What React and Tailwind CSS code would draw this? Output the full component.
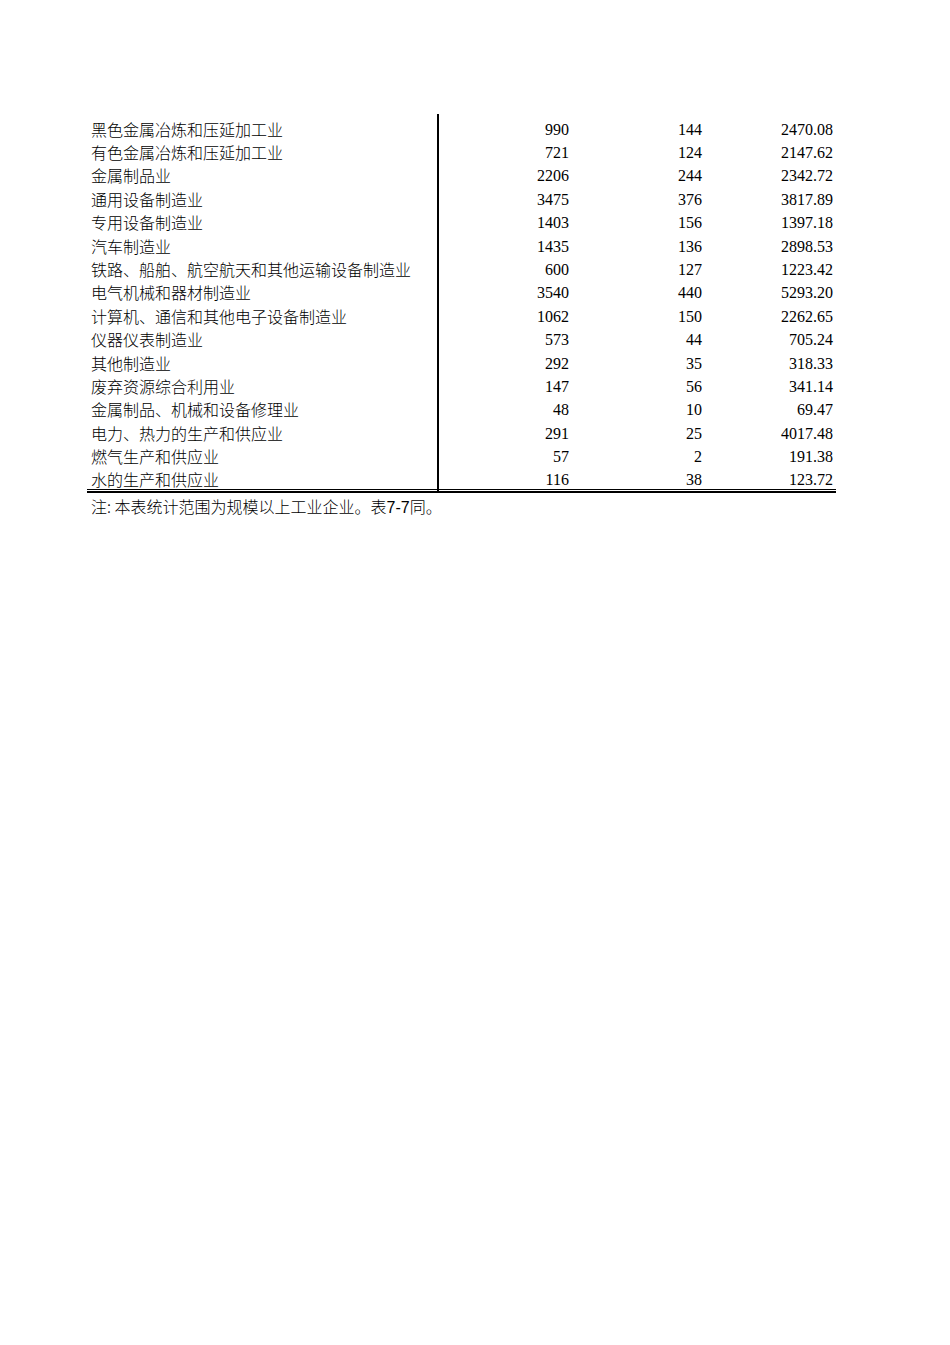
import React from "react";

const rows = [
  ["黑色金属冶炼和压延加工业", "990", "144", "2470.08"],
  ["有色金属冶炼和压延加工业", "721", "124", "2147.62"],
  ["金属制品业", "2206", "244", "2342.72"],
  ["通用设备制造业", "3475", "376", "3817.89"],
  ["专用设备制造业", "1403", "156", "1397.18"],
  ["汽车制造业", "1435", "136", "2898.53"],
  ["铁路、船舶、航空航天和其他运输设备制造业", "600", "127", "1223.42"],
  ["电气机械和器材制造业", "3540", "440", "5293.20"],
  ["计算机、通信和其他电子设备制造业", "1062", "150", "2262.65"],
  ["仪器仪表制造业", "573", "44", "705.24"],
  ["其他制造业", "292", "35", "318.33"],
  ["废弃资源综合利用业", "147", "56", "341.14"],
  ["金属制品、机械和设备修理业", "48", "10", "69.47"],
  ["电力、热力的生产和供应业", "291", "25", "4017.48"],
  ["燃气生产和供应业", "57", "2", "191.38"],
  ["水的生产和供应业", "116", "38", "123.72"],
];

const cjk = { fontFamily: '"Noto Sans CJK SC", "Noto Sans", sans-serif' };
const num = { fontFamily: '"Liberation Serif", "Times New Roman", serif' };

export default function App() {
  return (
    <div className="w-[950px] h-[1345px] bg-white text-black">
      <div className="pl-[87px] pt-[114px] w-[836px]">
        <div className="w-[749px]">
          <div className="flex h-[3px]">
            <div className="w-[352px] border-r-2 border-black" />
          </div>
          {rows.map((r, i) => {
            const last = i === rows.length - 1;
            const nshift = last ? "translate-y-[2px]" : "translate-y-[1px]";
            return (
              <div
                key={i}
                className={
                  "flex text-[16px] leading-none " +
                  (last ? "h-[21.7px] border-b border-black" : "h-[23.4px]")
                }
              >
                <div
                  className="w-[352px] border-r-2 border-black pl-[4px] flex items-center whitespace-nowrap font-light"
                  style={cjk}
                >
                  <span className={last ? "translate-y-[1px]" : ""}>{r[0]}</span>
                </div>
                <div className="w-[132px] pr-[2px] flex items-center justify-end" style={num}>
                  <span className={nshift}>{r[1]}</span>
                </div>
                <div className="w-[133px] pr-[2px] flex items-center justify-end" style={num}>
                  <span className={nshift}>{r[2]}</span>
                </div>
                <div className="w-[132px] pr-[3px] flex items-center justify-end" style={num}>
                  <span className={nshift}>{r[3]}</span>
                </div>
              </div>
            );
          })}
          <div className="flex h-[1px]">
            <div className="w-[352px] border-r-2 border-black" />
          </div>
          <div className="h-[2px] bg-black" />
          <div className="pl-[4px] pt-[3px] text-[16px] leading-[20px] whitespace-nowrap font-light" style={cjk}>
            注: 本表统计范围为规模以上工业企业。表
            <span className="font-normal" style={{ fontFamily: '"Liberation Sans", Arial, sans-serif' }}>7-7</span>
            同。
          </div>
        </div>
      </div>
    </div>
  );
}
